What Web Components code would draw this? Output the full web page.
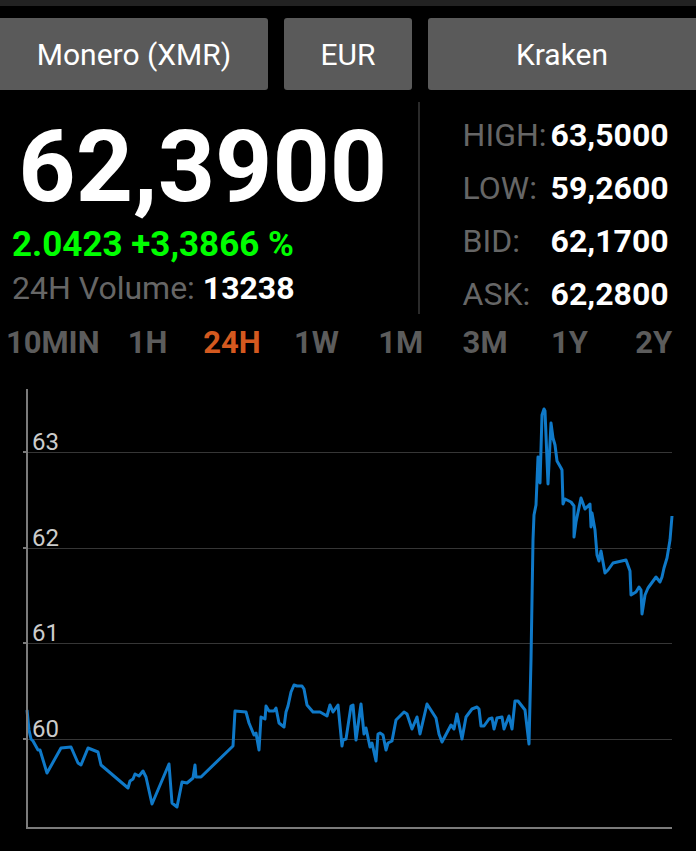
<!DOCTYPE html>
<html lang="en">
<head>
<meta charset="utf-8">
<meta name="viewport" content="width=device-width, initial-scale=1">
<title>Monero (XMR) ticker</title>
<style>
  body { margin: 0; background: #000; color: #fff; font-family: Roboto, "Noto Sans", sans-serif; }
</style>
</head>
<body>
<ticker-app></ticker-app>
<script>
class BaseElement extends HTMLElement {
  constructor() {
    super();
    this.attachShadow({ mode: 'open' });
  }
  render(html) { this.shadowRoot.innerHTML = html; }
}

/* Grey picker button; its label is slotted in. */
customElements.define('picker-button', class extends BaseElement {
  connectedCallback() {
    this.render(`<style>
      :host { display: block; }
      button { width: 100%; height: 72px; border: 0; border-radius: var(--corners, 3px); padding: 2px 4px 0;
        background: #5a5a5a; color: #fff; font: 400 30px/36px Roboto, sans-serif; cursor: pointer; }
    </style><button type="button"><slot></slot></button>`);
  }
});

/* Last price, its change and the traded volume. */
customElements.define('price-panel', class extends BaseElement {
  connectedCallback() {
    this.render(`<style>
      :host { display: block; padding: 9px 24px 0 12px; white-space: nowrap; }
      .price { font-size: 100px; line-height: 112px; font-weight: 700; text-align: center; }
      .change { font-size: 35px; line-height: 44px; font-weight: 700; color: #0f0; }
      .volume { font-size: 32px; line-height: 42px; font-weight: 400; color: #666; }
      b { font-weight: 700; color: #fff; }
    </style>
    <div class="price"><slot name="price"></slot></div>
    <div class="change"><slot name="change"></slot></div>
    <div class="volume">24H Volume: <b><slot name="volume"></slot></b></div>`);
  }
});

/* High, low, bid and ask. */
customElements.define('quote-list', class extends BaseElement {
  connectedCallback() {
    const rows = [['HIGH', '63,5000'], ['LOW', '59,2600'], ['BID', '62,1700'], ['ASK', '62,2800']];
    this.render(`<style>
      :host { display: block; border-left: 2px solid #2a2a2a; padding: 14px 0 1px 43px; }
      dl { display: grid; grid-template-columns: 88px auto; justify-content: start; row-gap: 15px;
        margin: 0; font-size: 32px; line-height: 38px; white-space: nowrap; }
      dt { font-weight: 400; color: #666; }
      dd { margin: 0; font-weight: 700; }
    </style><dl>${rows.map(([k, v]) => `<dt>${k}:</dt><dd>${v}</dd>`).join('')}</dl>`);
  }
});

/* Time range selector. */
customElements.define('range-tabs', class extends BaseElement {
  connectedCallback() {
    const names = ['10MIN', '1H', '24H', '1W', '1M', '3M', '1Y', '2Y'];
    this.render(`<style>
      :host { display: block; }
      nav { display: grid; grid-template-columns: 5fr repeat(7, 4fr); }
      button { border: 0; padding: 0; background: none; color: #5c5c5c;
        font: 700 31px/58px Roboto, sans-serif; cursor: pointer; }
      button[aria-pressed="true"] { color: #d4591f; }
    </style><nav>${names.map(n =>
      `<button type="button" aria-pressed="${n === '24H'}">${n}</button>`).join('')}</nav>`);
    this.shadowRoot.querySelector('nav').addEventListener('click', e => {
      const hit = e.target.closest('button');
      if (!hit) return;
      for (const b of this.shadowRoot.querySelectorAll('button')) b.setAttribute('aria-pressed', b === hit);
    });
  }
});

/* Price history line chart. */
customElements.define('price-chart', class extends BaseElement {
  connectedCallback() {
    const grid = [[63, 452], [62, 548], [61, 643], [60, 739]];
    const line = `27,710 29,730 31,739 33,741 38,750 40,750 47,773 61,748 71,747 78,763 81,765 88,748 98,752 101,765
      128,788 130,781 133,779 135,774 139,776 143,771 146,777 152,804 169,764 172,803 177,807
      182,782 187,783 193,778 195,765 196,777 201,777 233,746 235,711 246,712 249,723 254,735 256,733 259,750
      261,717 265,719 266,706 269,711 274,711 276,708 279,723 284,727 286,712 288,706 291,692 294,685 297,686
      302,686 304,689 307,705 313,712 320,712 327,716 330,705 333,712 338,705 342,746 343,740 346,739 351,706
      353,705 356,740 361,704 364,734 366,728 370,747 372,743 376,761 378,734 380,733 383,735 386,750 388,743
      392,741 396,720 404,712 407,714 412,729 417,717 420,734 427,704 436,718 439,734 442,742 451,725 454,729
      457,714 462,739 466,717 472,709 477,707 479,709 481,726 484,726 489,719 492,718 494,729 497,718 502,717
      504,729 509,716 512,729 515,701 518,701 525,710 529,744 531,660 533,540 534,515 536,505 538,457 540,483
      542,415 544,409 545,411 548,484 551,423 553,438 555,445 557,461 561,468 562,470 563,504 565,499 571,502
      574,506 574,537 576,522 581,498 585,509 590,504 591,527 592,513 595,530 597,555 599,561 601,551 605,573
      608,570 613,563 626,560 630,571 631,595 636,592 639,587 641,590 642,614 645,595 648,588 656,577 660,582
      662,577 664,568 667,558 670,540 672,516`;
    this.render(`<style>
      :host { display: block; }
      svg { display: block; width: 100%; }
      .grid { stroke: #363636; stroke-width: 1; shape-rendering: crispEdges; }
      .axis { fill: none; stroke: #7b7b7b; stroke-width: 2; }
      .line { fill: none; stroke: #0f79c8; stroke-width: 3; stroke-linejoin: round; }
      text { fill: #ccc; font: 400 24px Roboto, sans-serif; }
    </style>
    <svg viewBox="0 372 696 479" role="img" aria-label="Price over the last 24 hours">
      ${grid.map(([, y]) => `<path class="grid" d="M27 ${y}H672"/>`).join('')}
      <polyline class="line" points="${line}"/>
      <path class="axis" d="M27 389V828H672"/>
      ${grid.map(([v, y]) => `<path class="axis" d="M23 ${y}H27"/><text x="32" y="${y - 2}">${v}</text>`).join('')}
    </svg>`);
  }
});

customElements.define('ticker-app', class extends BaseElement {
  connectedCallback() {
    this.render(`<style>
      :host { display: block; border-top: 6px solid #222; }
      header { display: grid; grid-template-columns: 1fr 128px 1fr; gap: 16px; padding: 12px 0; }
      header :first-child { --corners: 0 3px 3px 0; }
      header :last-child { --corners: 3px 0 0 3px; }
      section { display: grid; grid-template-columns: 3fr 2fr; }
    </style>
    <header>
      <picker-button>Monero (XMR)</picker-button>
      <picker-button>EUR</picker-button>
      <picker-button>Kraken</picker-button>
    </header>
    <section>
      <price-panel>
        <span slot="price">62,3900</span>
        <span slot="change">2.0423 +3,3866 %</span>
        <span slot="volume">13238</span>
      </price-panel>
      <quote-list></quote-list>
    </section>
    <range-tabs></range-tabs>
    <price-chart></price-chart>`);
  }
});
</script>
</body>
</html>
